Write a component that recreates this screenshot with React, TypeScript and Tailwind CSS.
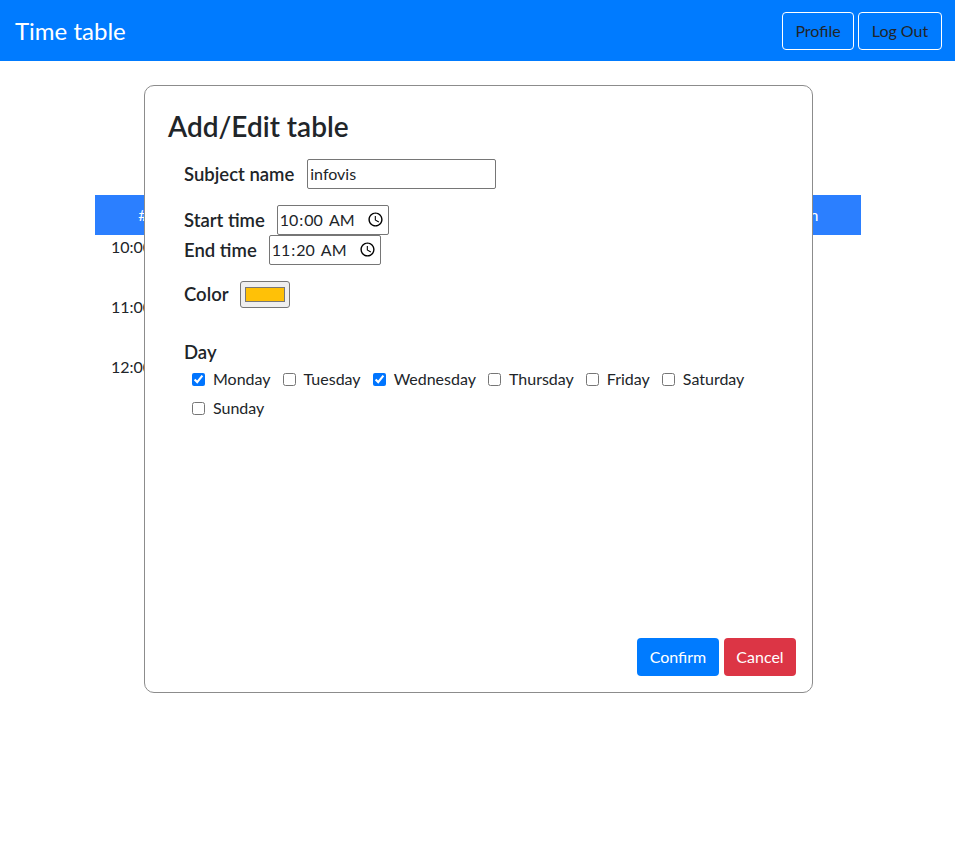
import React from "react";

const days = ["Monday", "Tuesday", "Wednesday", "Thursday", "Friday", "Saturday", "Sunday"];
const checked = new Set(["Monday", "Wednesday"]);
const headers = ["#", "Mon", "Tue", "Wed", "Thu", "Fri", "Sat", "Sun"];
const times = ["10:00", "11:00", "12:00"];

export default function App() {
  return (
    <div className="min-h-[867px] bg-white text-[#212529] font-['Lato','Noto_Sans',sans-serif]">
      <nav className="h-[61px] bg-[#007bff] flex items-center justify-between pl-[15px] pr-[13px]">
        <span className="text-[24px] text-white leading-none">Time table</span>
        <div className="flex gap-[4px]">
          <button className="w-[72px] h-[38px] border border-white rounded-[4px] text-[16px] text-[#212529]">Profile</button>
          <button className="w-[84px] h-[38px] border border-white rounded-[4px] text-[16px] text-[#212529]">Log Out</button>
        </div>
      </nav>

      <main className="relative pt-[134px]">
        <div className="ml-[95px] w-[766px] text-[16px]">
          <div className="grid grid-cols-8 bg-blue-500 text-white h-[40px] items-center">
            {headers.map((h, i) => (
              <div key={h} className={i === 7 ? "text-center pr-[16px]" : "text-center"}>{h}</div>
            ))}
          </div>
          {times.map((t) => (
            <div key={t} className="grid grid-cols-8 h-[60px]">
              <div className="pl-[16px] leading-[24px]">{t}</div>
            </div>
          ))}
        </div>

        <div className="absolute left-[144px] top-[24px] w-[669px] h-[608px] bg-white border border-[#8c8c8c] rounded-[10px] flex flex-col">
          <h2 className="pl-[23px] pt-[24px] text-[28px] font-semibold leading-[1.2]">Add/Edit table</h2>

          <form className="flex-1 pl-[39px] pt-[15px] flex flex-col">
            <div className="flex items-center gap-[13px] h-[30px]">
              <label className="text-[18.5px] font-semibold leading-[24px]">Subject name</label>
              <input
                type="text"
                defaultValue="infovis"
                className="w-[189px] h-[30px] border border-[#767676] rounded-[2px] px-[2px] text-[16px]"
              />
            </div>

            <div className="flex items-center gap-[12px] h-[30px] mt-[16px]">
              <label className="text-[18.5px] font-semibold leading-[24px]">Start time</label>
              <input
                type="time"
                defaultValue="10:00"
                className="h-[30px] border border-[#767676] rounded-[2px] px-[1px] text-[16px]"
              />
            </div>
            <div className="flex items-center gap-[12px] h-[30px]">
              <label className="text-[18.5px] font-semibold leading-[24px]">End time</label>
              <input
                type="time"
                defaultValue="11:20"
                className="h-[30px] border border-[#767676] rounded-[2px] px-[1px] text-[16px]"
              />
            </div>

            <div className="flex items-center gap-[11px] h-[27px] mt-[16px]">
              <label className="text-[18.5px] font-semibold leading-[24px]">Color</label>
              <input
                type="color"
                defaultValue="#ffc107"
                className="w-[50px] h-[27px] bg-[#efefef] border border-[#767676] rounded-[3px] px-[2px] py-[1px]"
              />
            </div>

            <div className="mt-[32px] text-[18.5px] font-semibold leading-[24px]">Day</div>
            <div className="flex flex-wrap pl-[8px] pr-[20px] pt-[1px] text-[16px]">
              {days.map((d) => (
                <label key={d} className="flex items-center gap-[8px] mr-[12px] h-[29px]">
                  <input type="checkbox" defaultChecked={checked.has(d)} className="w-[13px] h-[13px]" />
                  <span>{d}</span>
                </label>
              ))}
            </div>
          </form>

          <div className="flex justify-end gap-[5px] pr-[16px] pb-[16px]">
            <button className="w-[82px] h-[38px] rounded-[4px] bg-[#007bff] text-white text-[16px]">Confirm</button>
            <button className="w-[72px] h-[38px] rounded-[4px] bg-[#dc3545] text-white text-[16px]">Cancel</button>
          </div>
        </div>
      </main>
    </div>
  );
}
